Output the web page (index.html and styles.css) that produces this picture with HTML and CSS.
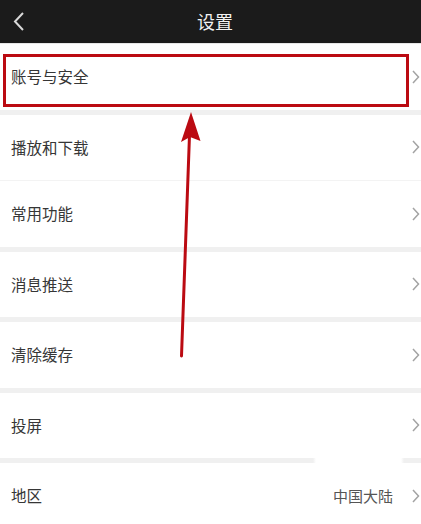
FILE: index.html
```html
<!DOCTYPE html>
<html lang="zh-CN">
<head>
  <meta charset="UTF-8" />
  <meta name="viewport" content="width=device-width, initial-scale=1" />
  <title>设置</title>
  <link rel="stylesheet" href="styles.css">
</head>
<body>

<header class="topbar">
  <svg class="back" width="12" height="20" viewBox="0 0 12 20">
    <path d="M10 2 L2 10.5 L10 19" fill="none" stroke="#d8d8d8" stroke-width="2" />
  </svg>
  <h1>设置</h1>
</header>

<main class="settings">
  <div class="row">
    <span class="label">账号与安全</span>
    <svg class="arrow" width="8" height="14" viewBox="0 0 8 14"><path d="M1 1 L6.5 7 L1 13" /></svg>
  </div>
  <div class="band"></div>
  <div class="row">
    <span class="label">播放和下载</span>
    <svg class="arrow" width="8" height="14" viewBox="0 0 8 14"><path d="M1 1 L6.5 7 L1 13" /></svg>
  </div>
  <div class="line"></div>
  <div class="row">
    <span class="label">常用功能</span>
    <svg class="arrow" width="8" height="14" viewBox="0 0 8 14"><path d="M1 1 L6.5 7 L1 13" /></svg>
  </div>
  <div class="band"></div>
  <div class="row">
    <span class="label">消息推送</span>
    <svg class="arrow" width="8" height="14" viewBox="0 0 8 14"><path d="M1 1 L6.5 7 L1 13" /></svg>
  </div>
  <div class="band"></div>
  <div class="row">
    <span class="label">清除缓存</span>
    <svg class="arrow" width="8" height="14" viewBox="0 0 8 14"><path d="M1 1 L6.5 7 L1 13" /></svg>
  </div>
  <div class="band"></div>
  <div class="row">
    <span class="label">投屏</span>
    <svg class="arrow" width="8" height="14" viewBox="0 0 8 14"><path d="M1 1 L6.5 7 L1 13" /></svg>
  </div>
  <div class="band band-cut"></div>
  <div class="row">
    <span class="label">地区</span>
    <span class="value">中国大陆</span>
    <svg class="arrow" width="8" height="14" viewBox="0 0 8 14"><path d="M1 1 L6.5 7 L1 13" /></svg>
  </div>
</main>

<!-- 标注：红框和箭头 -->
<svg class="mark" width="421" height="524" viewBox="0 0 421 524">
  <rect x="4.5" y="55.5" width="403" height="50" fill="none" stroke="#bb0a12" stroke-width="3" />
  <path d="M189.5 135 L181.5 356" stroke="#bb0a12" stroke-width="3" stroke-linecap="round" fill="none" />
  <path d="M191 112 L181 142 L190 137 L200.5 141 Z" fill="#bb0a12" />
</svg>

</body>
</html>
```

FILE: styles.css
```css
* {
  box-sizing: border-box;
}

body {
  margin: 0;
  background: #fff;
  font-family: "Noto Sans CJK SC", "Noto Sans", sans-serif;
  color: #363636;
  position: relative;
  overflow: hidden;
}

.topbar {
  height: 44px;
  background: #1b1b1b;
  border-bottom: 1px solid #e6e6e6;
  display: flex;
  align-items: center;
  justify-content: center;
  position: relative;
}

.topbar h1 {
  margin: -2px 0 0 9px;
  font-size: 18px;
  font-weight: normal;
  color: #f2f2f2;
  line-height: 1;
}

.back {
  position: absolute;
  left: 13px;
  top: 11px;
}

.settings {
  display: flex;
  flex-direction: column;
}

.row {
  height: 65.5px;
  display: flex;
  align-items: center;
  padding: 0 1px 0 11px;
  background: #fff;
}

.label {
  flex: 1;
  font-size: 15.5px;
  line-height: 1;
}

.value {
  font-size: 15px;
  color: #555;
  margin-right: 19px;
}

.arrow {
  fill: none;
  stroke: #a3a3a3;
  stroke-width: 1.5;
}

.band {
  height: 5px;
  background: #f0f0f0;
}

.band-cut {
  background: linear-gradient(to right, #f0f0f0 313px, #fff 316px, #fff 401px, #f0f0f0 404px);
}

.line {
  height: 1px;
  background: #f3f3f3;
}

.mark {
  position: absolute;
  left: 0;
  top: 0;
  pointer-events: none;
}
```
